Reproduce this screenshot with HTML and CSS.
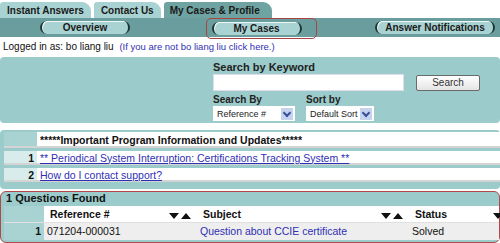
FILE: index.html
```html
<!DOCTYPE html>
<html lang="en">
<head>
  <meta charset="UTF-8" />
  <title>My Cases &amp; Profile</title>
  <link rel="stylesheet" href="styles.css">
</head>
<body>
  <div class="tabs">
    <div class="tab">Instant Answers</div>
    <div class="tab">Contact Us</div>
    <div class="tab tab-active">My Cases &amp; Profile</div>
  </div>

  <div class="subnav">
    <div class="pill-slot pill-overview"><span class="pill">Overview</span></div>
    <div class="pill-slot pill-cases current"><span class="pill">My Cases</span></div>
    <div class="pill-slot pill-notify"><span class="pill">Answer Notifications</span></div>
  </div>

  <div class="logged">
    Logged in as: bo liang liu
    <a class="logout" href="#">(If you are not bo liang liu click here.)</a>
  </div>

  <div class="search-panel">
    <div class="search-box">
      <div class="label">Search by Keyword</div>
      <div class="search-row">
        <input class="keyword" type="text">
        <button class="search-btn">Search</button>
      </div>
      <div class="select-row">
        <div class="field">
          <div class="label">Search By</div>
          <div class="select sel-ref"><span>Reference #</span><i class="arrow"></i></div>
        </div>
        <div class="field">
          <div class="label">Sort by</div>
          <div class="select sel-sort"><span>Default Sort</span><i class="arrow"></i></div>
        </div>
      </div>
    </div>
  </div>

  <div class="info-frame">
    <table class="info-table">
      <tr class="info-head">
        <td class="num"></td>
        <td>*****Important Program Information and Updates*****</td>
      </tr>
      <tr>
        <td class="num">1</td>
        <td><a href="#">** Periodical System Interruption: Certifications Tracking System **</a></td>
      </tr>
      <tr>
        <td class="num">2</td>
        <td><a href="#">How do I contact support?</a></td>
      </tr>
    </table>
  </div>

  <div class="cases-frame">
    <div class="found">1 Questions Found</div>
    <table class="cases-table">
      <tr class="cases-head">
        <td class="num"></td>
        <td class="col-ref">Reference #<span class="sorter"><i class="down"></i><i class="up"></i></span></td>
        <td class="col-subj">Subject<span class="sorter"><i class="down"></i><i class="up"></i></span></td>
        <td class="col-status">Status<span class="sorter edge"><i class="down"></i></span></td>
      </tr>
      <tr class="cases-row">
        <td class="num">1</td>
        <td>071204-000031</td>
        <td><a class="plain" href="#">Question about CCIE certificate</a></td>
        <td>Solved</td>
      </tr>
    </table>
  </div>
</body>
</html>
```

FILE: styles.css
```css
:root {
  --teal-light: #a9d3d2;
  --teal-panel: #9ccbcb;
  --teal-dark: #6a9d9d;
  --teal-tab: #6fa3a2;
  --link: #2f2fb4;
  --text: #111111;
}

* {
  margin: 0;
  padding: 0;
  box-sizing: border-box;
}

body {
  width: 500px;
  height: 243px;
  overflow: hidden;
  background: #ffffff;
  font-family: "Liberation Sans", Arial, sans-serif;
  font-size: 11px;
  color: var(--text);
}

a {
  color: var(--link);
}

a.plain {
  text-decoration: none;
}

/* top tabs */
.tabs {
  display: flex;
  gap: 3px;
  height: 18px;
  padding-top: 2px;
}

.tab {
  background: var(--teal-light);
  border-radius: 3px 9px 0 0;
  padding: 1px 7px 0 7px;
  font-weight: 700;
  font-size: 10px;
  line-height: 15px;
  color: #1a1a1a;
}

.tab-active {
  background: var(--teal-tab);
  padding-left: 6px;
  padding-right: 12px;
}

/* sub navigation */
.subnav {
  display: flex;
  height: 19px;
  background: var(--teal-dark);
  align-items: center;
}

.pill-slot {
  display: flex;
  align-items: center;
  justify-content: center;
}

.pill-overview {
  margin-left: 40px;
  width: 90px;
}

.pill-cases {
  margin-left: 76px;
  width: 111px;
  height: 21px;
  border: 1px solid #a94444;
  border-radius: 5px;
  margin-top: 2px;
}

.pill-notify {
  margin-left: 58px;
  width: 120px;
}

.pill {
  display: block;
  width: 100%;
  background: var(--teal-light);
  border-radius: 8px;
  border-left: 2px solid #1d3333;
  border-right: 2px solid #1d3333;
  box-shadow: 1px 1px 0 #eef6f6 inset;
  text-align: center;
  font-weight: 700;
  font-size: 10px;
  line-height: 13px;
  color: #1a1a1a;
}

.pill-cases .pill {
  width: 90px;
  margin-left: -10px;
}

/* login line */
.logged {
  padding: 3px 3px 0;
  height: 20px;
  font-size: 10px;
  line-height: 13px;
}

.logout {
  margin-left: 3px;
  text-decoration: none;
  font-size: 9.5px;
}

/* search panel */
.search-panel {
  background: var(--teal-panel);
  border-radius: 4px;
  height: 66px;
  padding: 3px 0 0 213px;
}

.label {
  font-weight: 700;
  font-size: 10px;
  line-height: 12px;
  color: #222;
}

.search-box > .label {
  font-size: 11px;
  line-height: 14px;
}

.search-row {
  display: flex;
  align-items: center;
  gap: 12px;
  margin-bottom: 3px;
}

.keyword {
  width: 191px;
  height: 17px;
  border: 1px solid #dde;
  background: #fff;
}

.search-btn {
  width: 64px;
  height: 16px;
  border: 1px solid #6a6a6a;
  border-radius: 2px;
  background: linear-gradient(#ffffff, #e4e4e4);
  font-family: "Liberation Sans", Arial, sans-serif;
  font-size: 10px;
  color: #333;
}

.select-row {
  display: flex;
  gap: 11px;
}

.select {
  display: flex;
  align-items: center;
  justify-content: space-between;
  height: 15px;
  background: #fff;
  padding: 0 2px 0 4px;
  font-size: 9px;
  color: #222;
}

.sel-ref {
  width: 82px;
}

.sel-sort {
  width: 68px;
}

.arrow {
  width: 12px;
  height: 12px;
  background: #c5d3ee;
  position: relative;
}

.arrow::after {
  content: "";
  position: absolute;
  left: 3px;
  top: 2px;
  width: 4px;
  height: 4px;
  border-right: 2px solid #3a4f9a;
  border-bottom: 2px solid #3a4f9a;
  transform: rotate(45deg);
}

/* info table */
.info-frame {
  margin-top: 7px;
  background: var(--teal-panel);
  border-radius: 4px;
  padding: 2px 0 4px 4px;
}

.info-table,
.cases-table {
  width: 100%;
  border-collapse: collapse;
}

.info-table td {
  background: #fff;
  border-bottom: 3px solid var(--teal-panel);
  height: 17px;
  font-size: 10.5px;
  padding-left: 3px;
  box-shadow: 0 -2px 0 #d4d4d4 inset;
}

.info-table .num {
  width: 33px;
  background: #d9ecec;
  font-weight: 700;
  text-align: right;
  padding-right: 3px;
}

.info-head td {
  font-weight: 700;
}

.info-head .num {
  background: var(--teal-light);
}

/* cases table */
.cases-frame {
  margin-top: 2px;
  background: var(--teal-panel);
  border: 1px solid #b04a4a;
  border-radius: 6px;
  padding: 0 0 2px 3px;
}

.found {
  font-weight: 700;
  font-size: 11px;
  line-height: 15px;
  padding-left: 2px;
  margin-top: -1px;
}

.cases-table td {
  height: 17px;
  font-size: 10.5px;
  padding-left: 3px;
}

.cases-head td {
  background: #fff;
  font-weight: 700;
  padding-left: 6px;
}

.cases-row td {
  background: #eeeeee;
  border-top: 1px solid #e0e0e0;
}

.cases-table .num {
  width: 40px;
  background: var(--teal-light);
  text-align: right;
  padding-right: 3px;
  font-weight: 700;
}

.col-ref {
  width: 153px;
}

.col-subj {
  width: 212px;
}

.sorter {
  float: right;
  display: flex;
  gap: 2px;
  margin-top: 5px;
  margin-right: 6px;
}

.sorter.edge {
  margin-right: -4px;
}

.down {
  border-left: 5px solid transparent;
  border-right: 5px solid transparent;
  border-top: 6px solid #111;
}

.up {
  border-left: 5px solid transparent;
  border-right: 5px solid transparent;
  border-bottom: 6px solid #111;
}
```
